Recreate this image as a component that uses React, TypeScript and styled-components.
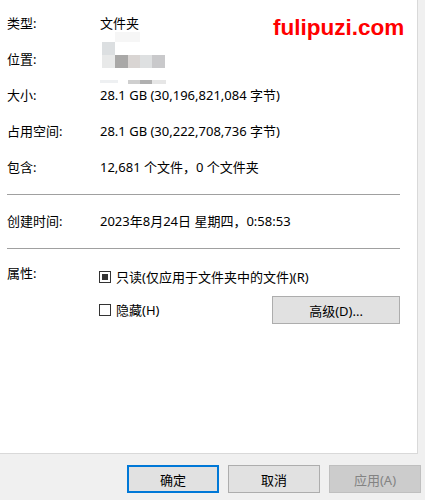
import React from "react";
import styled, { createGlobalStyle } from "styled-components";

const FONT = `"Noto Sans", "Noto Sans CJK SC", sans-serif`;

const Global = createGlobalStyle`
  html, body {
    margin: 0;
    padding: 0;
    background: #f0f0f0;
    width: 425px;
    height: 500px;
    overflow: hidden;
  }
  body {
    font-family: ${FONT};
    font-size: 13px;
    color: #000;
  }
`;

const Window = styled.div`
  position: relative;
  width: 425px;
  height: 500px;
  display: flex;
  flex-direction: column;
  background: #f0f0f0;
`;

const Panel = styled.div`
  box-sizing: border-box;
  width: 418px;
  height: 454px;
  background: #fff;
  border-right: 1px solid #d9d9d9;
  border-bottom: 1px solid #d9d9d9;
  padding: 5px 17px 0 7px;
  display: flex;
  flex-direction: column;
`;

const InfoRow = styled.div`
  display: grid;
  grid-template-columns: 93px 1fr;
  grid-template-rows: 36px;
  align-items: center;
  height: 36px;
  line-height: 20px;
  white-space: nowrap;
`;

const Label = styled.div`
  font-size: 13px;
`;

const Value = styled.div`
  font-size: 13px;
  display: flex;
  align-items: center;
  height: 20px;
`;

const PictureSlot = styled.div`
  height: 20px;
  display: flex;
  align-items: center;
  overflow: visible;
`;

const Divider = styled.div`
  height: 1px;
  background: #a0a0a0;
  margin: 9px 0 8px;
`;

const AttrSection = styled.div`
  display: grid;
  grid-template-columns: 92px 1fr;
  margin-top: 6px;
  line-height: 20px;
`;

const AttrOptions = styled.div`
  display: flex;
  flex-direction: column;
  gap: 9px;
  padding-top: 4px;
`;

const OptionRow = styled.div`
  display: flex;
  align-items: center;
  min-height: 20px;
  white-space: nowrap;
`;

const Box = styled.span<{ $checked?: boolean }>`
  box-sizing: border-box;
  flex: none;
  width: 12px;
  height: 12px;
  border: 1px solid #333;
  background: #fff;
  margin-right: 5px;
  display: inline-flex;
  align-items: center;
  justify-content: center;
  &::after {
    content: "";
    display: ${(p) => (p.$checked ? "block" : "none")};
    width: 6px;
    height: 6px;
    background: #333;
  }
`;

const DialogButton = styled.button<{ $variant?: "default" | "primary" | "disabled"; $width?: number }>`
  box-sizing: border-box;
  width: ${(p) => p.$width ?? 92}px;
  height: 28px;
  padding: 0;
  font-family: ${FONT};
  font-size: 13px;
  background: ${(p) => (p.$variant === "disabled" ? "#cccccc" : "#e1e1e1")};
  color: ${(p) => (p.$variant === "disabled" ? "#838383" : "#000")};
  border: ${(p) =>
    p.$variant === "primary"
      ? "2px solid #0078d7"
      : p.$variant === "disabled"
      ? "1px solid #bfbfbf"
      : "1px solid #adadad"};
`;

const AdvancedButton = styled(DialogButton)`
  margin-left: auto;
`;

const ButtonBar = styled.div`
  display: flex;
  justify-content: flex-end;
  gap: 9px;
  padding: 11px 4px 0 0;
`;

const Watermark = styled.div`
  position: absolute;
  left: 273px;
  top: 17px;
  font-family: "Liberation Sans", Arial, sans-serif;
  font-weight: bold;
  font-size: 22.5px;
  line-height: 1;
  color: #ff0000;
`;

const Blurred = () => (
  <svg width="70" height="54" viewBox="0 0 70 54" style={{ display: "block", flex: "none" }}>
    <rect x="15" y="0" width="25" height="10" fill="#f6f6f6" />
    <rect x="2" y="10" width="13" height="13" fill="#dcdfe1" />
    <rect x="2" y="23" width="13" height="13" fill="#e8e9e9" />
    <rect x="15" y="23" width="13" height="13" fill="#a9a8a7" />
    <rect x="28" y="23" width="12" height="13" fill="#d9d5d3" />
    <rect x="40" y="23" width="12" height="13" fill="#dee0e1" />
    <rect x="52" y="23" width="13" height="13" fill="#c9c9cb" />
    <rect x="0" y="48" width="18" height="3" fill="#eef0f2" />
    <rect x="28" y="48" width="12" height="4" fill="#cfcfcf" />
    <rect x="40" y="48" width="12" height="4" fill="#b0b0b0" />
    <rect x="52" y="48" width="14" height="4" fill="#e6e6e6" />
  </svg>
);

export default function App() {
  return (
    <>
      <Global />
      <Window>
        <Panel>
          <InfoRow>
            <Label>类型:</Label>
            <Value>文件夹</Value>
          </InfoRow>
          <InfoRow>
            <Label>位置:</Label>
            <PictureSlot>
              <Blurred />
            </PictureSlot>
          </InfoRow>
          <InfoRow>
            <Label>大小:</Label>
            <Value>28.1 GB (30,196,821,084 字节)</Value>
          </InfoRow>
          <InfoRow>
            <Label>占用空间:</Label>
            <Value>28.1 GB (30,222,708,736 字节)</Value>
          </InfoRow>
          <InfoRow>
            <Label>包含:</Label>
            <Value>12,681 个文件，0 个文件夹</Value>
          </InfoRow>
          <Divider />
          <InfoRow>
            <Label>创建时间:</Label>
            <Value>2023年8月24日 星期四，0:58:53</Value>
          </InfoRow>
          <Divider />
          <AttrSection>
            <Label>属性:</Label>
            <AttrOptions>
              <OptionRow>
                <Box $checked />
                只读(仅应用于文件夹中的文件)(R)
              </OptionRow>
              <OptionRow>
                <Box />
                隐藏(H)
                <AdvancedButton $width={128}>高级(D)...</AdvancedButton>
              </OptionRow>
            </AttrOptions>
          </AttrSection>
        </Panel>
        <ButtonBar>
          <DialogButton $variant="primary">确定</DialogButton>
          <DialogButton>取消</DialogButton>
          <DialogButton $variant="disabled">应用(A)</DialogButton>
        </ButtonBar>
        <Watermark>fulipuzi.com</Watermark>
      </Window>
    </>
  );
}
